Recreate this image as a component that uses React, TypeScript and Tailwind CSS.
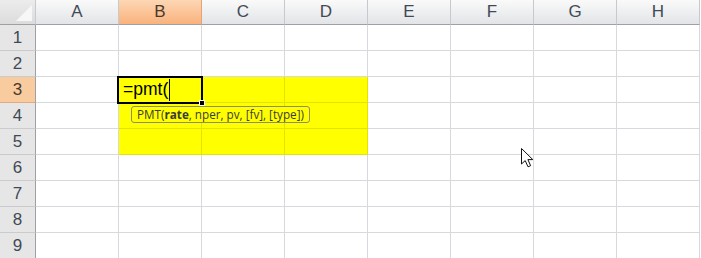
import React from 'react';

const columns = ['A', 'B', 'C', 'D', 'E', 'F', 'G', 'H'];
const rows = [1, 2, 3, 4, 5, 6, 7, 8, 9];

// B3:D5 is filled yellow
const isYellow = (r: number, c: number) => r >= 3 && r <= 5 && c >= 1 && c <= 3;

const MouseCursor = () => (
  <svg width="14" height="21" viewBox="0 0 14 21" className="absolute left-[521px] top-[148px]">
    <path
      d="M0.5 0.5 L0.5 16 L4.2 12.6 L7 18.8 L9.6 17.7 L6.9 11.6 L11.8 11.6 Z"
      fill="#ffffff"
      stroke="#111111"
      strokeWidth="1"
      strokeLinejoin="round"
    />
  </svg>
);

export default function App() {
  return (
    <div className="relative w-[701px] h-[258px] overflow-hidden bg-white font-['Liberation_Sans',Arial,sans-serif]">
      <div className="grid grid-cols-[36px_repeat(8,83px)] grid-rows-[25px_repeat(9,26px)]">
        {/* corner */}
        <div className="relative border-r border-b border-r-[#c6c9cd] border-b-[#9da1a6] bg-gradient-to-b from-[#ececec] to-[#dcdcdc]">
          <div className="absolute right-[3px] bottom-[3px] w-0 h-0 border-l-[16px] border-l-transparent border-b-[16px] border-b-[#f7f7f7]" />
        </div>
        {columns.map((col) => (
          <div
            key={col}
            className={
              col === 'B'
                ? 'flex items-center justify-center border-r border-b border-r-[#e3a574] border-b-[#9da1a6] bg-gradient-to-b from-[#fdd6b4] to-[#f9b27c] text-[17px] text-[#4a3a2c]'
                : 'flex items-center justify-center border-r border-b border-r-[#c6c9cd] border-b-[#9da1a6] bg-gradient-to-b from-[#fafafa] to-[#e2e4e7] text-[17px] text-[#3f4a56]'
            }
          >
            {col}
          </div>
        ))}

        {rows.map((r) => (
          <React.Fragment key={r}>
            <div
              className={
                r === 3
                  ? 'flex items-center justify-center border-r border-b border-r-[#9da1a6] border-b-[#e0aa7e] bg-[#f8cc9f] text-[17px] text-[#4a3a2c]'
                  : 'flex items-center justify-center border-r border-b border-r-[#9da1a6] border-b-[#c9cbce] bg-[#e6e6e6] text-[17px] text-[#3f4a56]'
              }
            >
              {r}
            </div>
            {columns.map((col, c) => (
              <div
                key={col}
                className={
                  isYellow(r, c)
                    ? 'border-r border-b border-[#e3e300] bg-[#ffff00]'
                    : 'border-r border-b border-[#d6d9de] bg-white'
                }
              />
            ))}
          </React.Fragment>
        ))}
      </div>

      {/* active cell B3 */}
      <div className="absolute left-[117px] top-[76px] w-[86px] h-[28px] border-2 border-black flex items-center pl-[4px]">
        <span className="text-[17.5px] leading-none text-black">=pmt(</span>
        <span className="ml-[1px] w-px h-[22px] bg-black" />
      </div>
      <div className="absolute left-[199px] top-[100px] w-[6px] h-[6px] bg-black border border-white" />

      {/* function tooltip */}
      <div className="absolute left-[131px] top-[106px] w-[179px] h-[17px] px-[5px] flex items-center rounded-[3px] border border-[#8f8f66] bg-[#ffff00] font-['Open_Sans',sans-serif] text-[11.7px] leading-none text-[#3b3b3b] whitespace-nowrap">
        PMT(<span className="font-bold">rate</span>, nper, pv, [fv], [type])
      </div>

      <MouseCursor />
    </div>
  );
}
